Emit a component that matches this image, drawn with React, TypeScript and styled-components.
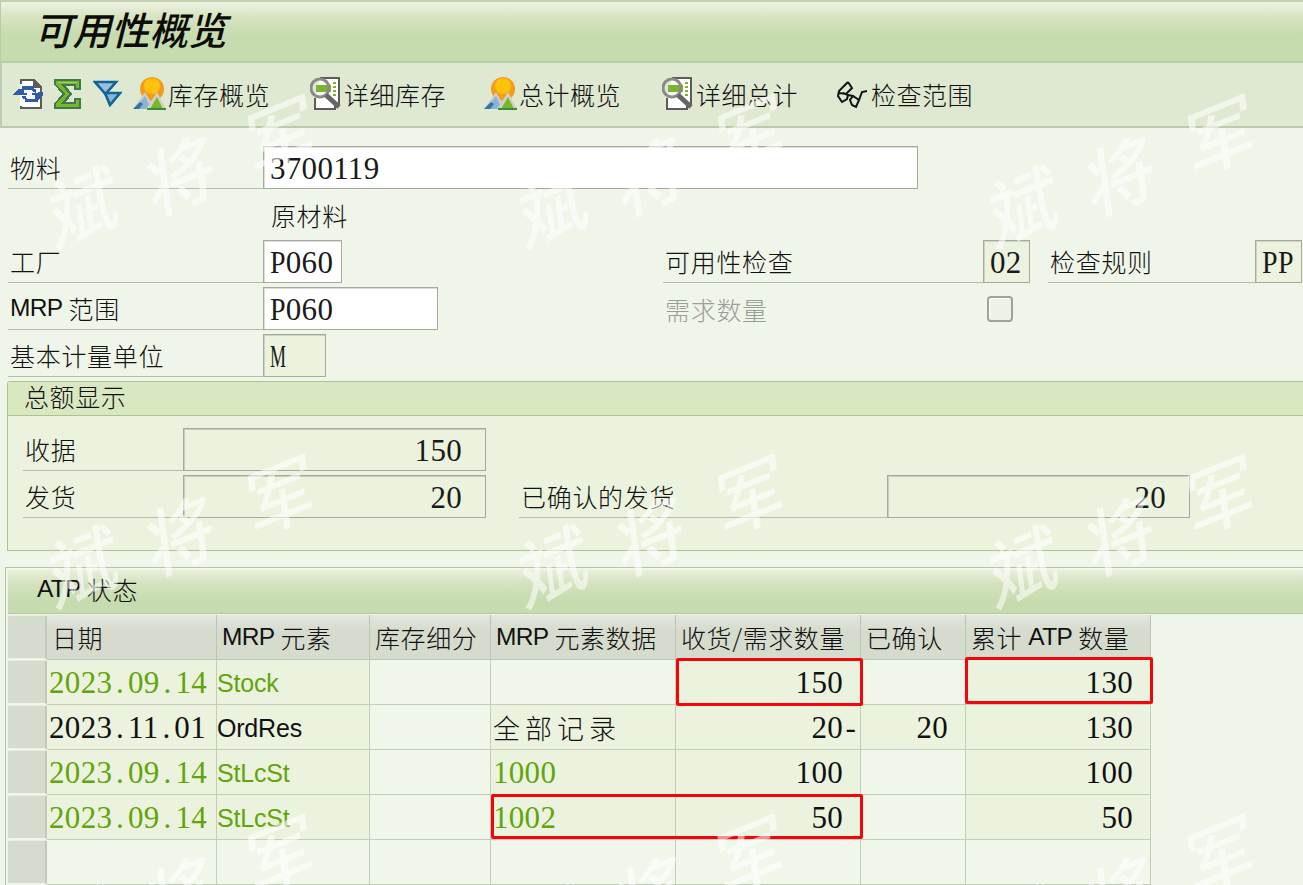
import React from "react";
import styled, { createGlobalStyle } from "styled-components";

const CJK = `"Noto Sans CJK SC", "Liberation Serif", serif`;
const NUM = `"Liberation Serif", "Noto Sans CJK SC", serif`;
const SANS = `"Liberation Sans", "Noto Sans CJK SC", sans-serif`;

const Global = createGlobalStyle`
  html, body { margin: 0; padding: 0; background: #f0f5e9; }
  * { box-sizing: border-box; }
`;

const Page = styled.div`
  position: relative;
  width: 1303px;
  height: 885px;
  overflow: hidden;
  background: #f0f5e9;
  color: #111;
  font-family: ${CJK};
  font-size: 25px;
  font-weight: 300;
`;

const TitleBar = styled.header`
  height: 63px;
  padding: 0 0 6px 33px;
  display: flex;
  align-items: center;
  background: linear-gradient(#eef3e4 0, #d8e4c2 14px, #c6dbae 34px, #c6dbae 100%);
  border-top: 2px solid #c3d2ae;
  border-bottom: 2px solid #b9cca4;
  border-left: 1px solid #b9cca4;
`;

const Title = styled.h1`
  margin: 0;
  font-size: 38.5px;
  font-weight: 500;
  font-style: italic;
  line-height: 1;
  color: #0c0c08;
`;

const Toolbar = styled.nav`
  height: 65px;
  padding: 0 0 2px 10px;
  display: flex;
  align-items: center;
  background: #dfe8d0;
  border-left: 2px solid #bfcbb0;
  border-bottom: 2px solid #bcc9ac;
`;

const IconSlot = styled.span<{ $mr?: number }>`
  display: inline-flex;
  margin-right: ${(p) => p.$mr ?? 0}px;
`;

const ToolButton = styled.span<{ $mr: number }>`
  display: inline-flex;
  align-items: center;
  gap: 2px;
  margin-right: ${(p) => p.$mr}px;
  white-space: nowrap;
  letter-spacing: 0.5px;
`;

const Form = styled.section`
  padding: 18px 0 0 8px;
  display: grid;
  grid-auto-rows: 43px;
  row-gap: 4px;
`;

const FormRow = styled.div`
  display: flex;
  align-items: stretch;
`;

const Label = styled.label<{ $w: number; $muted?: boolean; $flat?: boolean; $ml?: number }>`
  width: ${(p) => p.$w}px;
  margin-left: ${(p) => p.$ml ?? 0}px;
  padding: 0 0 0 2px;
  display: flex;
  align-items: center;
  flex: none;
  letter-spacing: 0.7px;
  color: ${(p) => (p.$muted ? "#9a9f94" : "#111")};
  border-bottom: ${(p) => (p.$flat ? "none" : "1px solid #b5bcab")};
`;

const Mrp = styled.span`
  font-family: ${SANS};
  font-weight: 400;
  font-size: 24.5px;
  letter-spacing: -0.7px;
`;

const Field = styled.span<{ $w: number; $tone?: "input" | "display" | "plain" }>`
  width: ${(p) => p.$w}px;
  flex: none;
  padding: 2px 0 0 6px;
  display: flex;
  align-items: center;
  font-family: ${NUM};
  font-size: 31px;
  font-weight: 400;
  letter-spacing: 0.3px;
  color: #1a1a1a;
  border: 1px solid ${(p) => (p.$tone === "plain" ? "transparent" : "#a6a9a0")};
  background: ${(p) =>
    p.$tone === "plain" ? "transparent" : p.$tone === "display" ? "#ebf3de" : "#fff"};
  box-shadow: ${(p) =>
    p.$tone === "plain" ? "none" : "inset 1px 1px 0 rgba(120,120,110,0.25)"};
`;

const Squeezed = styled.span<{ $to: number; $scale: number }>`
  display: inline-block;
  width: ${(p) => p.$to}px;
  transform: scaleX(${(p) => p.$scale});
  transform-origin: left center;
`;

const Description = styled.span`
  margin-left: 263px;
  display: flex;
  align-items: center;
  letter-spacing: 0.6px;
`;

const CheckSlot = styled.span`
  width: 48px;
  display: flex;
  align-items: center;
`;

const Check = styled.span`
  width: 26px;
  height: 26px;
  border: 2px solid #9ea396;
  border-radius: 4px;
  background: #eef1e8;
  box-shadow: inset 1px 1px 0 #fff;
`;

const Group = styled.section`
  margin: 4px 0 0 7px;
  height: 170px;
  background: #ebf3de;
  border: 1px solid #a9c48c;
  border-right: none;
  border-top-left-radius: 3px;
`;

const GroupHead = styled.h2`
  margin: 0;
  height: 34px;
  padding: 0 0 5px 16px;
  display: flex;
  align-items: center;
  font-size: 25px;
  font-weight: 300;
  letter-spacing: 0.6px;
  background: #d9e8c0;
  border-bottom: 1px solid #a9c48c;
`;

const GroupBody = styled.div`
  padding: 12px 0 0 15px;
  display: grid;
  grid-auto-rows: 43px;
  row-gap: 4px;
`;

const Total = styled.span<{ $w: number }>`
  width: ${(p) => p.$w}px;
  flex: none;
  padding: 2px 23px 0 0;
  display: flex;
  align-items: center;
  justify-content: flex-end;
  font-family: ${NUM};
  font-size: 31px;
  font-weight: 400;
  letter-spacing: 0.3px;
  color: #1a1a1a;
  background: #ebf3de;
  border: 1px solid #a6a9a0;
  box-shadow: inset 1px 1px 0 rgba(120, 120, 110, 0.3);
`;

const Atp = styled.section`
  margin: 16px 0 0 5px;
  padding: 2px 0 0 2px;
  border-top: 1px solid #b6c6a2;
  border-left: 1px solid #b6c6a2;
`;

const AtpHead = styled.h2`
  margin: 0;
  height: 44px;
  padding: 0 0 6px 29px;
  display: flex;
  align-items: center;
  font-size: 25px;
  font-weight: 300;
  letter-spacing: 0.6px;
  background: linear-gradient(#e8efdb 0, #d3e2bd 14px, #c6dbae 32px);
  border-bottom: 1px solid #b4c5a0;
`;

const TableWrap = styled.div`
  position: relative;
  margin-top: 1px;
`;

const Table = styled.div`
  display: grid;
  width: 1143px;
  grid-template-columns: 39px 170px 153px 121px 185px 185px 105px 185px;
  grid-template-rows: 45px repeat(5, 45px);
`;

const HeadCell = styled.div`
  padding-left: 5px;
  display: flex;
  align-items: center;
  white-space: nowrap;
  background: linear-gradient(#e4e7dd 0, #d5dbcd 16px);
  border-right: 1px solid #bcc5b0;
  border-bottom: 1px solid #bcc5b0;
  letter-spacing: 0.6px;
`;

const Selector = styled.div`
  background: #d6dccd;
  border-right: 2px solid #c2c9b8;
  border-bottom: 2px solid #f0f5e9;
  border-top: 1px solid #e9ecdf;
  border-radius: 2px;
`;

const Cell = styled.div<{ $filled?: boolean; $right?: boolean; $kind?: "num" | "sans"; $green?: boolean }>`
  padding: ${(p) => (p.$kind ? "2px" : "0")} ${(p) => (p.$right ? 17 : 2)}px 0 ${(p) => (p.$kind === "sans" ? 0 : 2)}px;
  display: flex;
  align-items: center;
  justify-content: ${(p) => (p.$right ? "flex-end" : "flex-start")};
  white-space: nowrap;
  background: ${(p) => (p.$filled ? "#ebf3de" : "#f1f6eb")};
  border-right: 1px solid #c3cdb7;
  border-bottom: 1px solid #c3cdb7;
  color: ${(p) => (p.$green ? "#62a50a" : "#111")};
  font-family: ${(p) => (p.$kind === "sans" ? SANS : p.$kind === "num" ? NUM : CJK)};
  font-size: ${(p) => (p.$kind === "sans" ? "25px" : p.$kind === "num" ? "31px" : "27px")};
  font-weight: ${(p) => (p.$kind ? 400 : 300)};
  letter-spacing: ${(p) => (p.$kind === "num" ? "0.3px" : p.$kind === "sans" ? "-0.2px" : "5px")};
`;

const WideChar = styled.span`
  display: inline-block;
  width: 15.8px;
  text-align: center;
`;

const TrailingSign = styled(WideChar)`
  margin-right: -15.8px;
`;

const Highlight = styled.div<{ $x: number; $y: number; $w: number; $h: number }>`
  position: absolute;
  left: ${(p) => p.$x}px;
  top: ${(p) => p.$y}px;
  width: ${(p) => p.$w}px;
  height: ${(p) => p.$h}px;
  border: 3px solid #f5040c;
  border-radius: 2px;
  pointer-events: none;
`;

const Watermark = styled.div`
  position: absolute;
  inset: 0;
  display: grid;
  grid-template-columns: repeat(3, 470px);
  grid-auto-rows: 360px;
  pointer-events: none;
`;

const WatermarkTile = styled.div`
  position: relative;
`;

const WatermarkGlyph = styled.span<{ $x: number; $y: number }>`
  position: absolute;
  left: ${(p) => p.$x}px;
  top: ${(p) => p.$y}px;
  transform: translate(-50%, -50%) rotate(-22deg) skewX(-14deg);
  font-size: 72px;
  font-weight: 500;
  line-height: 1;
  color: rgba(255, 255, 255, 0.55);
`;

const RefreshIcon = () => (
  <svg width="32" height="32" viewBox="0 0 32 32" shapeRendering="crispEdges">
    <path d="M8 1h14l8 8v22H8z" fill="#fff" />
    <path d="M8 1h14v2H10v3H8zM22 1l8 8v22H8v-3h2v1h18V10h-7V3h1z" fill="#5c5c5c" />
    <path d="M6 11h4V8h12v3h2v4l-3-1-1-2H12v3h3v2H1z" fill="#2f5da8" />
    <path d="M31 14v4h-5v6H13v-3h-2l-1-3h4l1 3h8v-4h-3v-2z" fill="#2f5da8" />
    <path d="M1 16l5-5v5zM31 17l-5 5v-5z" fill="#2f5da8" />
  </svg>
);

const SigmaIcon = () => (
  <svg width="27" height="30" viewBox="0 0 27 30" shapeRendering="crispEdges">
    <path d="M0 0h27v11h-7V7H12l6 8-6 8h8v-4h7v11H0v-5l8-10L0 5z" fill="#3f7a4c" />
    <path d="M2 2h23v7h-3V5H7l8 10-8 10h15v-4h3v7H2v-3l9-10L2 5z" fill="#7ab62c" />
    <path d="M4 3h19v1H4z" fill="#a3cf62" />
  </svg>
);

const FilterIcon = () => (
  <svg width="29" height="27" viewBox="0 0 29 27" strokeLinejoin="miter">
    <path d="M12 13h15L17 25z" fill="#8fb2da" stroke="#0d6696" strokeWidth="2.6" />
    <path d="M2 2h21L12.5 14z" fill="#9dbde0" stroke="#0d6696" strokeWidth="2.6" />
  </svg>
);

const MountainIcon = () => (
  <svg width="33" height="33" viewBox="0 0 33 33">
    <circle cx="19" cy="12" r="12" fill="#f59a1a" />
    <circle cx="19" cy="9" r="8" fill="#fcc20c" />
    <path d="M0 32l12-17 10 17z" fill="#c8cfc4" />
    <path d="M2 32l10-13 6 13z" fill="#88b2d6" />
    <path d="M0 32l7-7 3 2-4 5z" fill="#2f73a8" />
    <path d="M13 32l11-17 9 17z" fill="#ccd2c4" />
    <path d="M17 32l7-12 6 12z" fill="#7ab62c" />
    <path d="M14 31h19v2H14z" fill="#3d8a3a" />
  </svg>
);

const DetailIcon = () => (
  <svg width="32" height="33" viewBox="0 0 32 33">
    <path d="M10 1h19v27h-4v4H5v-11" fill="#fff" stroke="#5c5c5c" strokeWidth="2" />
    <path d="M6 8h15v7H6z" fill="#7ab62c" />
    <path d="M23 6h3M23 10h3M23 14h3M23 18h3" stroke="#7ab62c" strokeWidth="2" />
    <circle cx="10" cy="11" r="9" fill="none" stroke="#8a8a8a" strokeWidth="3" />
    <path d="M16 18l13 12" stroke="#666" strokeWidth="5" />
  </svg>
);

const GlassesIcon = () => (
  <svg width="33" height="32" viewBox="0 0 33 32" fill="none" stroke="#111" strokeWidth="2">
    <path d="M12 4l4 6-6 6-7-1M12 4L3 13l-1 5 4 6 5-3 1-4-5-2" />
    <path d="M12 17l5 1 6 4-3 7-4-2-2-5 3-4" />
    <path d="M23 22l3-8 5-1" />
  </svg>
);

const watermarkColumns = [0, 1, 2];
const watermarkRows = [0, 1, 2];

const DateText = ({ value }: { value: string }) => (
  <>
    {value.split("").map((c, i) =>
      c === "." ? <WideChar key={i}>.</WideChar> : <React.Fragment key={i}>{c}</React.Fragment>
    )}
  </>
);

const Qty = ({ value }: { value: string }) =>
  value.endsWith("-") ? (
    <>
      {value.slice(0, -1)}
      <TrailingSign>-</TrailingSign>
    </>
  ) : (
    <>{value}</>
  );

const rows = [
  { green: true, date: "2023.09.14", el: "Stock", data: "", qty: "150", conf: "", atp: "130" },
  { green: false, date: "2023.11.01", el: "OrdRes", data: "全部记录", qty: "20-", conf: "20", atp: "130" },
  { green: true, date: "2023.09.14", el: "StLcSt", data: "1000", qty: "100", conf: "", atp: "100" },
  { green: true, date: "2023.09.14", el: "StLcSt", data: "1002", qty: "50", conf: "", atp: "50" },
];

export default function App() {
  return (
    <Page>
      <Global />
      <TitleBar>
        <Title>可用性概览</Title>
      </TitleBar>
      <Toolbar>
        <IconSlot $mr={10}><RefreshIcon /></IconSlot>
        <IconSlot $mr={12}><SigmaIcon /></IconSlot>
        <IconSlot $mr={11}><FilterIcon /></IconSlot>
        <ToolButton $mr={40}><MountainIcon />库存概览</ToolButton>
        <ToolButton $mr={38}><DetailIcon />详细库存</ToolButton>
        <ToolButton $mr={41}><MountainIcon />总计概览</ToolButton>
        <ToolButton $mr={38}><DetailIcon />详细总计</ToolButton>
        <ToolButton $mr={0}><GlassesIcon />检查范围</ToolButton>
      </Toolbar>
      <Form>
        <FormRow>
          <Label $w={255}>物料</Label>
          <Field $w={655}>3700119</Field>
        </FormRow>
        <FormRow>
          <Description>原材料</Description>
        </FormRow>
        <FormRow>
          <Label $w={255}>工厂</Label>
          <Field $w={79}><Squeezed $to={15.8} $scale={0.9}>P</Squeezed>060</Field>
          <Label $w={320} $ml={321}>可用性检查</Label>
          <Field $w={47} $tone="display">02</Field>
          <Label $w={207} $ml={18}>检查规则</Label>
          <Field $w={47} $tone="display"><Squeezed $to={15.8} $scale={0.9}>P</Squeezed><Squeezed $to={15.8} $scale={0.9}>P</Squeezed></Field>
        </FormRow>
        <FormRow>
          <Label $w={255}><Mrp>MRP</Mrp>&nbsp;范围</Label>
          <Field $w={175}><Squeezed $to={15.8} $scale={0.9}>P</Squeezed>060</Field>
          <Label $w={324} $ml={225} $muted $flat>需求数量</Label>
          <CheckSlot><Check /></CheckSlot>
        </FormRow>
        <FormRow>
          <Label $w={255}>基本计量单位</Label>
          <Field $w={63} $tone="display"><Squeezed $to={15.8} $scale={0.58}>M</Squeezed></Field>
        </FormRow>
      </Form>
      <Group>
        <GroupHead>总额显示</GroupHead>
        <GroupBody>
          <FormRow>
            <Label $w={160}>收据</Label>
            <Total $w={303}>150</Total>
          </FormRow>
          <FormRow>
            <Label $w={160}>发货</Label>
            <Total $w={303}>20</Total>
            <Label $w={368} $ml={33}>已确认的发货</Label>
            <Total $w={303}>20</Total>
          </FormRow>
        </GroupBody>
      </Group>
      <Atp>
        <AtpHead><Mrp>ATP</Mrp>&nbsp;状态</AtpHead>
        <TableWrap>
          <Table>
            <Selector />
            <HeadCell>日期</HeadCell>
            <HeadCell><Mrp>MRP</Mrp>&nbsp;元素</HeadCell>
            <HeadCell>库存细分</HeadCell>
            <HeadCell><Mrp>MRP</Mrp>&nbsp;元素数据</HeadCell>
            <HeadCell>收货/需求数量</HeadCell>
            <HeadCell>已确认</HeadCell>
            <HeadCell>累计&nbsp;<Mrp>ATP</Mrp>&nbsp;数量</HeadCell>
            {rows.map((r) => (
              <React.Fragment key={r.date + r.el + r.data}>
                <Selector />
                <Cell $filled $kind="num" $green={r.green}><DateText value={r.date} /></Cell>
                <Cell $filled $kind="sans" $green={r.green}>{r.el}</Cell>
                <Cell />
                <Cell $filled={!!r.data} $kind={r.data === "全部记录" ? undefined : "num"} $green={r.green}>{r.data}</Cell>
                <Cell $filled $right $kind="num"><Qty value={r.qty} /></Cell>
                <Cell $filled={!!r.conf} $right $kind="num">{r.conf}</Cell>
                <Cell $filled $right $kind="num">{r.atp}</Cell>
              </React.Fragment>
            ))}
            <Selector />
            <Cell />
            <Cell />
            <Cell />
            <Cell />
            <Cell />
            <Cell />
            <Cell />
          </Table>
          <Highlight $x={668} $y={43} $w={187} $h={48} />
          <Highlight $x={957} $y={42} $w={188} $h={47} />
          <Highlight $x={483} $y={179} $w={372} $h={45} />
        </TableWrap>
      </Atp>
      <Watermark>
        {watermarkRows.map((row) =>
          watermarkColumns.map((col) => (
            <WatermarkTile key={`${row}-${col}`}>
              <WatermarkGlyph $x={83} $y={202}>斌</WatermarkGlyph>
              <WatermarkGlyph $x={180} $y={172}>将</WatermarkGlyph>
              <WatermarkGlyph $x={280} $y={132}>军</WatermarkGlyph>
            </WatermarkTile>
          ))
        )}
      </Watermark>
    </Page>
  );
}
